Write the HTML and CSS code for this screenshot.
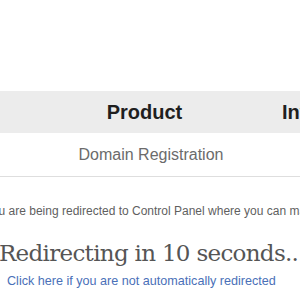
FILE: index.html
```html
<!DOCTYPE html>
<html lang="en">
<head>
    <meta charset="UTF-8">
    <meta name="viewport" content="width=device-width, initial-scale=1.0">
    <title>Order Complete</title>
    <link rel="stylesheet" href="styles.css">
</head>
<body class="body">
    <div class="page">
        <div class="order">
            <div class="row head">
                <div class="cell product">Product</div>
                <div class="cell invoice">Invoice</div>
            </div>
            <div class="row item">
                <div class="cell product">Domain Registration</div>
                <div class="cell invoice">#10482</div>
            </div>
        </div>

        <p class="notice">You are being redirected to Control Panel where you can manage your domain.</p>
        <h1 class="countdown">Redirecting in 10 seconds...</h1>
        <a class="manual" href="#">Click here if you are not automatically redirected</a>
    </div>
</body>
</html>
```

FILE: styles.css
```css
.body {
    margin: 0;
    background-color: #ffffff;
    font-family: Arial, "Liberation Sans", sans-serif;
    overflow: hidden;
}

.page {
    padding-top: 91px;
    width: 700px;
}

.order {
    border-bottom: 1px solid #dedede;
}

.row {
    display: flex;
}

.head {
    background-color: #ececec;
    height: 42px;
    align-items: center;
    font-size: 20px;
    font-weight: bold;
    color: #1f1f1f;
}

.item {
    height: 43px;
    align-items: center;
    font-size: 16px;
    color: #6b6b6b;
}

.cell.product {
    width: 276px;
    padding-left: 13px;
    box-sizing: border-box;
    text-align: center;
}

.item .cell.product {
    padding-left: 26px;
}

.cell.invoice {
    padding-left: 6px;
}

.item .cell.invoice {
    visibility: hidden;
}

.notice {
    margin: 27px 0 0 -15px;
    font-size: 12px;
    color: #5f5f5f;
    white-space: nowrap;
}

.countdown {
    margin: 20px 0 0 -1px;
    font-family: "DejaVu Serif", serif;
    font-size: 23px;
    line-height: 30px;
    font-weight: normal;
    letter-spacing: -0.7px;
    color: #555555;
    white-space: nowrap;
}

.manual {
    display: block;
    margin: 6px 0 0 7px;
    font-size: 12.6px;
    color: #4a70b8;
    text-decoration: none;
    white-space: nowrap;
}
```
